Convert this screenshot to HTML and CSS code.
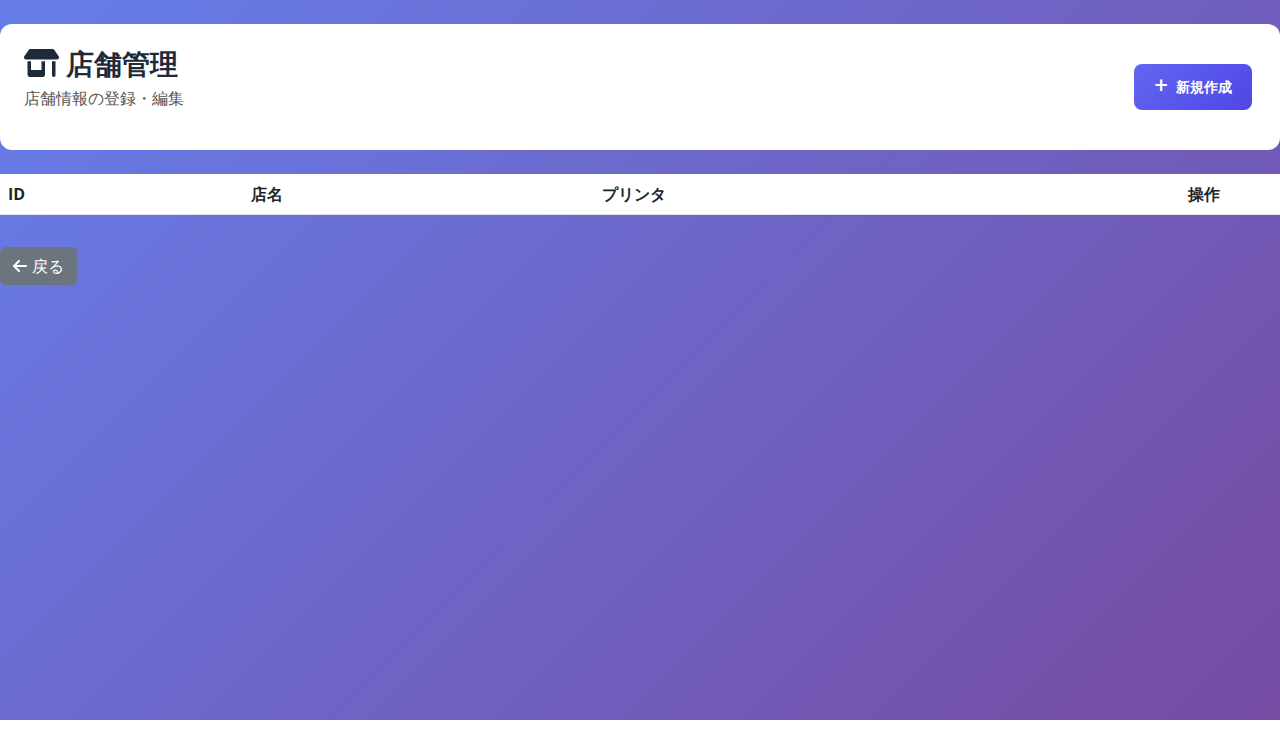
FILE: index.html
```html
<!DOCTYPE html>
<html lang="ja">
<head>
<meta charset="utf-8">
<meta name="viewport" content="width=device-width, initial-scale=1">
<title>店舗管理</title>
<link rel="stylesheet" href="styles.css">
</head>
<body>
<main class="page">
  <header class="page-header">
    <div class="page-heading">
      <h1 class="page-title"><svg class="icon-shop" viewBox="0 0 640 512" aria-hidden="true"><path d="M36.8 192H603.2c20.3 0 36.8-16.5 36.8-36.8c0-7.3-2.2-14.4-6.2-20.4L558.2 21.4C549.3 8 534.4 0 518.3 0H121.7c-16 0-31 8-39.9 21.4L6.2 134.7c-4 6.1-6.2 13.2-6.2 20.4C0 175.5 16.5 192 36.8 192zM64 224V384v80c0 26.5 21.5 48 48 48H336c26.5 0 48-21.5 48-48V384 224H320V384H128V224H64zm448 0V480c0 17.7 14.3 32 32 32s32-14.3 32-32V224H512z"/></svg>店舗管理</h1>
      <p class="page-subtitle">店舗情報の登録・編集</p>
    </div>
    <button type="button" class="create-button"><span class="create-plus" aria-hidden="true">+</span>新規作成</button>
  </header>
  <table class="store-table">
    <thead>
      <tr>
        <th scope="col">ID</th>
        <th scope="col">店名</th>
        <th scope="col">プリンタ</th>
        <th scope="col" class="actions-column">操作</th>
      </tr>
    </thead>
    <tbody></tbody>
  </table>
  <a class="back-link" href="#"><svg class="icon-arrow" viewBox="0 0 448 512" aria-hidden="true"><path d="M9.4 233.4c-12.5 12.5-12.5 32.8 0 45.3l160 160c12.5 12.5 32.8 12.5 45.3 0s12.5-32.8 0-45.3L109.2 288 416 288c17.7 0 32-14.3 32-32s-14.3-32-32-32l-306.7 0L214.6 118.6c12.5-12.5 12.5-32.8 0-45.3s-32.8-12.5-45.3 0l-160 160z"/></svg>戻る</a>
</main>
</body>
</html>
```
FILE: styles.css
```css
*, *::before, *::after {
  box-sizing: border-box;
}

body {
  margin: 0;
  background: #fff;
  color: #212529;
  font-family: "Open Sans", sans-serif;
  font-size: 16px;
  line-height: 24px;
}

.page {
  min-height: calc(100vh - 24px);
  padding-top: 24px;
  background: linear-gradient(135deg, #667eea 0%, #764ba2 100%);
}

.page-header {
  display: flex;
  align-items: center;
  justify-content: space-between;
  margin-bottom: 24px;
  padding: 24px 28px 24px 24px;
  border-radius: 12px;
  background: #fff;
}

.page-title {
  display: flex;
  align-items: center;
  gap: 7px;
  margin: 0 0 8px;
  color: #1e293b;
  font-size: 28px;
  font-weight: 700;
  line-height: 30px;
}

.icon-shop {
  width: 35px;
  height: 28px;
  fill: currentColor;
}

.page-subtitle {
  margin: 0 0 16px;
  color: #555;
}

.create-button {
  display: inline-flex;
  align-items: center;
  gap: 8px;
  height: 46px;
  padding: 0 20px;
  border: 0;
  border-radius: 8px;
  background: linear-gradient(135deg, #6366f1 0%, #4f46e5 100%);
  color: #fff;
  font: inherit;
  font-size: 14px;
  font-weight: 600;
  cursor: pointer;
}

.create-plus {
  padding-bottom: 4px;
  font-size: 24px;
  font-weight: 600;
}

.store-table {
  width: 100%;
  margin-bottom: 32px;
  border-collapse: collapse;
  background: #fff;
}

.store-table th {
  padding: 8px;
  border-bottom: 1px solid #dee2e6;
  font-weight: 700;
  text-align: left;
}

.store-table .actions-column {
  width: 100px;
}

.back-link {
  display: inline-flex;
  align-items: center;
  gap: 5px;
  padding: 7px 13px;
  border-radius: 6px;
  background: #6c757d;
  color: #fff;
  text-decoration: none;
}

.icon-arrow {
  width: 14px;
  height: 16px;
  fill: currentColor;
}
```
